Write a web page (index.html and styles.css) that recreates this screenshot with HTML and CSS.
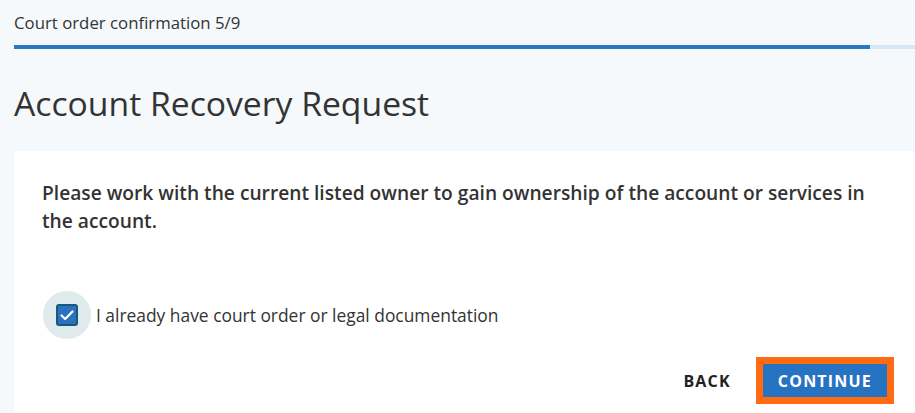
FILE: index.html
```html
<!DOCTYPE html>
<html lang="en">
<head>
<meta charset="utf-8">
<title>Account Recovery Request</title>
<link rel="stylesheet" href="styles.css">
</head>
<body>
<div class="page">
  <div class="progress">
    <div class="progress-label">Court order confirmation 5/9</div>
    <div class="progress-track"><div class="progress-fill" style="width:95%"></div></div>
  </div>
  <h1 class="title">Account Recovery Request</h1>
  <div class="card">
    <p class="message">Please work with the current listed owner to gain ownership of the account or services in the account.</p>
    <label class="check-row">
      <span class="check-halo">
        <svg class="check-box" width="22" height="22" viewBox="0 0 22 22" aria-hidden="true">
          <rect x="1" y="1" width="20" height="20" rx="2" fill="#2a72c0" stroke="#17597a" stroke-width="2"/>
          <path d="M5.5 11.5 L9.2 15 L16.5 7.5" fill="none" stroke="#ffffff" stroke-width="2.2" stroke-linecap="round" stroke-linejoin="round"/>
        </svg>
      </span>
      <span class="check-label">I already have court order or legal documentation</span>
    </label>
    <div class="actions">
      <button class="btn btn-back" type="button">BACK</button>
      <button class="btn btn-continue" type="button">CONTINUE</button>
    </div>
  </div>
</div>
</body>
</html>
```

FILE: styles.css
```css
* { box-sizing: border-box; }
html, body { margin: 0; padding: 0; }
body {
  background: #f5f9fc;
  font-family: "Open Sans", "Liberation Sans", sans-serif;
  color: #333333;
  overflow: hidden;
}
.page {
  padding-left: 14px;
}
.progress {
  padding-top: 12px;
}
.progress-label {
  font-size: 16.8px;
  line-height: 22px;
  color: #333333;
}
.progress-track {
  margin-top: 11px;
  height: 4px;
  background: #d5e6f6;
}
.progress-fill {
  height: 4px;
  background: #2a78c4;
}
.title {
  margin: 34px 0 28px;
  font-size: 33.7px;
  line-height: 40px;
  font-weight: 400;
  color: #333333;
}
.card {
  background: #ffffff;
  padding: 28px 28px 16px 28px;
}
.message {
  margin: 0;
  font-size: 19.2px;
  line-height: 28px;
  font-weight: 600;
  color: #333333;
}
.check-row {
  display: flex;
  align-items: center;
  gap: 5px;
  margin-top: 56px;
  margin-left: 1px;
}
.check-halo {
  width: 48px;
  height: 48px;
  border-radius: 50%;
  background: #dfeaec;
  display: flex;
  align-items: center;
  justify-content: center;
}
.check-box { display: block; }
.check-label {
  font-size: 17.4px;
  color: #333333;
}
.actions {
  display: flex;
  justify-content: flex-end;
  align-items: center;
  gap: 16px;
  margin-top: 25px;
}
.btn {
  font-family: "Open Sans", "Liberation Sans", sans-serif;
  font-size: 16px;
  font-weight: 700;
  letter-spacing: 1.2px;
  height: 33px;
  border: none;
  cursor: pointer;
  display: inline-flex;
  align-items: center;
}
.btn-back {
  background: transparent;
  color: #222222;
  padding: 0 16px;
}
.btn-continue {
  background: #2673c2;
  color: #ffffff;
  padding: 0 15px;
  outline: 7px solid #ff6a13;
}
```
